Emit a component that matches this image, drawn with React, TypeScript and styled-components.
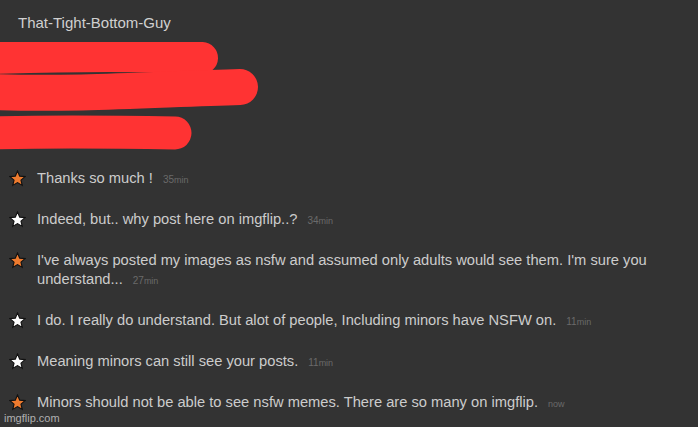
import React from 'react'
import styled, { createGlobalStyle } from 'styled-components'

const GlobalStyle = createGlobalStyle`
  html, body {
    margin: 0;
    background-color: #333333;
    font-family: 'Liberation Sans', Arial, sans-serif;
  }
`

const Page = styled.div`
	position: relative;
	width: 698px;
	height: 427px;
	overflow: hidden;
	background-color: #333333;
	color: #cccccc;
`

const Title = styled.div`
	padding: 14px 0 0 18px;
	font-size: 15px;
	line-height: 17px;
	color: #d0d0d0;
`

const Redaction = styled.svg`
	display: block;
	margin-top: 11px;
	width: 270px;
	height: 113px;
`

const Messages = styled.ul`
	list-style: none;
	margin: 0;
	padding: 14px 0 0 0;
	display: flex;
	flex-direction: column;
	gap: 22px;
`

const Row = styled.li`
	display: flex;
	align-items: flex-start;
`

const StarBox = styled.div`
	width: 37px;
	flex: 0 0 37px;
	display: flex;
	justify-content: center;
	padding-top: 1px;
	padding-right: 3px;
	box-sizing: border-box;
`

const Text = styled.div`
	width: 640px;
	font-size: 14.7px;
	line-height: 19px;
	color: #cccccc;
`

const Time = styled.span`
	margin-left: 10px;
	font-size: 10px;
	line-height: 1;
	color: #6a6a6a;
	small {
		font-size: 9px;
	}
`

const Watermark = styled.div`
	position: absolute;
	left: 4px;
	bottom: 3px;
	font-size: 11px;
	color: #b0b0b0;
`

const Star = ({ fill }: { fill: string }) => (
	<svg width="17" height="17" viewBox="0 0 24 24">
		<path
			d="M12 1.5l3.1 7.1 7.6.7-5.8 5 1.8 7.5L12 17.8l-6.7 4 1.8-7.5-5.8-5 7.6-.7z"
			fill={fill}
			stroke="#111"
			strokeWidth="1.6"
			strokeLinejoin="miter"
		/>
	</svg>
)

const orange = '#ee7b2f'
const white = '#ffffff'

const messages = [
	{ star: orange, text: 'Thanks so much !', n: '35', unit: 'min' },
	{ star: white, text: 'Indeed, but.. why post here on imgflip..?', n: '34', unit: 'min' },
	{
		star: orange,
		text: "I've always posted my images as nsfw and assumed only adults would see them. I'm sure you understand...",
		n: '27',
		unit: 'min',
	},
	{
		star: white,
		text: 'I do. I really do understand. But alot of people, Including minors have NSFW on.',
		n: '11',
		unit: 'min',
	},
	{ star: white, text: 'Meaning minors can still see your posts.', n: '11', unit: 'min' },
	{
		star: orange,
		text: 'Minors should not be able to see nsfw memes. There are so many on imgflip.',
		n: '',
		unit: 'now',
	},
]

const App: React.FC = () => {
	return (
		<>
			<GlobalStyle />
			<Page>
				<Title>That-Tight-Bottom-Guy</Title>
				<Redaction viewBox="0 0 270 113">
					<g stroke="#ff3333" strokeLinecap="round" fill="none">
						<path d="M-10 16 C 60 14, 140 13, 202 16" strokeWidth="32" />
						<path d="M-10 50 C 80 53, 160 47, 240 45" strokeWidth="36" />
						<path d="M-10 91 C 60 89, 120 90, 175 91" strokeWidth="33" />
					</g>
				</Redaction>
				<Messages>
					{messages.map((m, i) => (
						<Row key={i}>
							<StarBox>
								<Star fill={m.star} />
							</StarBox>
							<Text>
								{m.text}
								<Time>
									{m.n}
									<small>{m.unit}</small>
								</Time>
							</Text>
						</Row>
					))}
				</Messages>
				<Watermark>imgflip.com</Watermark>
			</Page>
		</>
	)
}

export default App
